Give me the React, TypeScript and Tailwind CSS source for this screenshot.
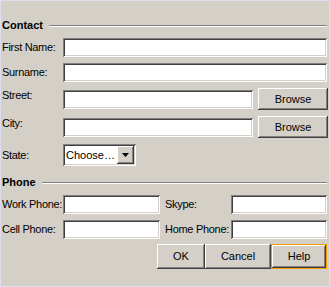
const sunken =
  'bg-white shadow-[inset_1px_1px_0_#808080,inset_-1px_-1px_0_#ffffff,inset_2px_2px_0_#404040,inset_-2px_-2px_0_#d4d0c8]';
const raised =
  'bg-[#d4d0c8] shadow-[inset_-1px_-1px_0_#404040,inset_1px_1px_0_#ffffff,inset_-2px_-2px_0_#808080,inset_2px_2px_0_#d4d0c8]';

function Field({ className = '' }: { className?: string }) {
  return <div className={`h-[19px] ${sunken} ${className}`} />;
}

function Header({ title }: { title: string }) {
  return (
    <div className="flex h-[13px] items-center">
      <span className="font-bold">{title}</span>
      <div className="ml-[6px] mr-px h-[2px] flex-1 border-t border-b border-t-[#808080] border-b-white" />
    </div>
  );
}

function Label({ text, className = '' }: { text: string; className?: string }) {
  return <span className={`shrink-0 whitespace-nowrap tracking-[-0.3px] ${className}`}>{text}</span>;
}

function Row({ label, children, top }: { label: string; children: React.ReactNode; top?: boolean }) {
  return (
    <div className={`flex ${top ? 'items-start' : 'items-center'}`}>
      <Label text={label} className={`w-[61px] ${top ? 'pt-px' : ''}`} />
      {children}
    </div>
  );
}

function Button({ label, className = '' }: { label: string; className?: string }) {
  return (
    <div className={`flex items-center justify-center ${raised} ${className}`}>{label}</div>
  );
}

export default function App() {
  return (
    <div
      className="h-[287px] w-[330px] border border-[#dcdcf4] bg-[#d4d0c8] pl-px pr-px pt-[18px] text-[11px] leading-[13px] text-black"
      style={{ fontFamily: '"Liberation Sans", Arial, sans-serif' }}
    >
      <div className="flex flex-col gap-[6px]">
        <Header title="Contact" />
        <Row label="First Name:">
          <Field className="mr-px flex-1" />
        </Row>
        <Row label="Surname:">
          <Field className="mr-px flex-1" />
        </Row>
        <Row label="Street:" top>
          <div className="flex h-[22px] flex-1 items-center gap-[5px]">
            <Field className="flex-1" />
            <Button label="Browse" className="h-[22px] w-[70px]" />
          </div>
        </Row>
        <Row label="City:" top>
          <div className="flex h-[22px] flex-1 items-center gap-[5px]">
            <Field className="flex-1" />
            <Button label="Browse" className="h-[22px] w-[70px]" />
          </div>
        </Row>
        <Row label="State:">
          <div className={`flex h-[22px] w-[73px] items-center pl-[3px] pr-[2px] ${sunken}`}>
            <span className="flex-1">Choose…</span>
            <div className={`flex h-[18px] w-[17px] items-center justify-center ${raised}`}>
              <svg width="7" height="4" viewBox="0 0 7 4">
                <path d="M0 0h7L3.5 4z" fill="#000" />
              </svg>
            </div>
          </div>
        </Row>
        <div className="mt-[4px]">
          <Header title="Phone" />
        </div>
        <div className="flex items-center">
          <Label text="Work Phone:" className="w-[61px]" />
          <Field className="w-[97px]" />
          <Label text="Skype:" className="ml-[5px] w-[66px]" />
          <Field className="mr-px flex-1" />
        </div>
        <div className="flex items-center">
          <Label text="Cell Phone:" className="w-[61px]" />
          <Field className="w-[97px]" />
          <Label text="Home Phone:" className="ml-[5px] w-[66px]" />
          <Field className="mr-px flex-1" />
        </div>
        <div className="-mt-px flex justify-end pr-px">
          <Button label="OK" className="h-[25px] w-[48px]" />
          <Button label="Cancel" className="h-[25px] w-[66px]" />
          <Button label="Help" className="h-[25px] w-[56px] border border-[#f5a000]" />
        </div>
      </div>
    </div>
  );
}
